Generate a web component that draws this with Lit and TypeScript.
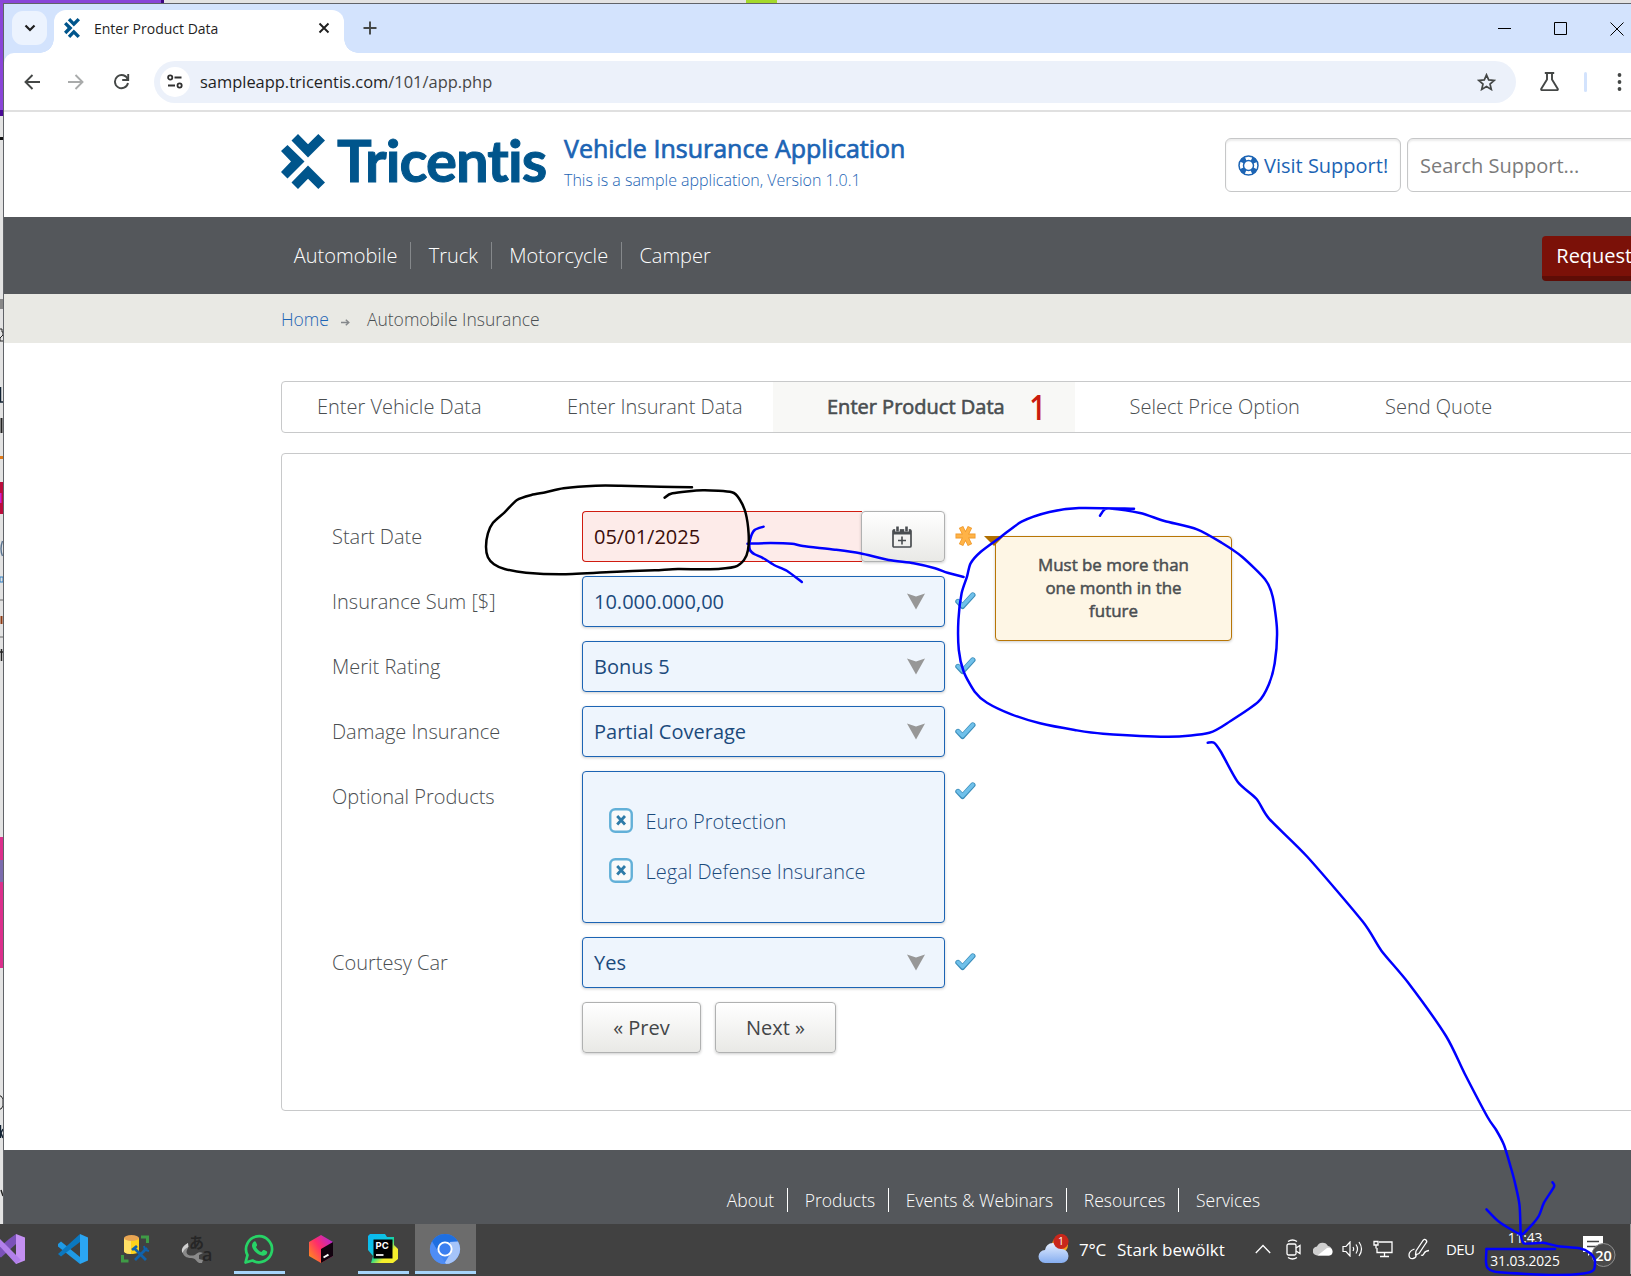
import { LitElement, html, css, svg } from "lit";
import { customElement, property } from "lit/decorators.js";

const base = css`
  :host { display: block; font-family: "Open Sans", "Noto Sans", "Liberation Sans", sans-serif; }
  * { box-sizing: border-box; }
  svg { display: block; flex: none; }
`;

const tricentisMark = (w: number, h: number) => html`
  <svg width=${w} height=${h} viewBox="0 0 44 55" preserveAspectRatio="none">
    <g fill="#00558c">
      <path d="M10.5 6.5 17 0l10 10.2L37.3 0 44 6.5 27 23.6z" />
      <path d="M6.5 11 23.5 27.5 6.5 44.5 0 38 10 27.5 0 17z" />
      <path d="M27 31.4 44 48.5 37.3 55 27 44.8 17 55 10.5 48.5z" />
    </g>
  </svg>`;

@customElement("browser-chrome")
export class BrowserChrome extends LitElement {
  static styles = [base, css`
    .tabs { display: flex; height: 49px; background: #d3e3fd; }
    .search { width: 35px; height: 34px; margin: 7px 0 0 8px; border-radius: 11px; background: #ecf3fe; display: grid; place-items: center; }
    .tab { position: relative; display: flex; align-items: center; width: 290px; height: 43px; margin: 6px 0 0 7px; padding: 0 0 7px 10px; background: #fff; border-radius: 12px 12px 0 0; font-size: 14px; color: #1f1f1f; }
    .tab::before, .tab::after { content: ""; position: absolute; bottom: 0; width: 14px; height: 14px; }
    .tab::before { left: -14px; background: radial-gradient(circle at 0 0, transparent 13.5px, #fff 14px); }
    .tab::after { right: -14px; background: radial-gradient(circle at 100% 0, transparent 13.5px, #fff 14px); }
    .name { width: 224px; margin-left: 14px; }
    .plus { margin: 17px 0 0 19px; }
    .win { display: flex; gap: 43px; margin: 18px 7px 0 auto; }
    .bar { display: flex; align-items: center; height: 57px; border-radius: 10px 0 0 0; background: #fff; }
    .corner { background: #d3e3fd; }
    .rule { height: 2px; background: #e0e0e0; }
    .back { margin-left: 20px; } .fwd { margin-left: 28px; } .reload { margin-left: 29px; }
    .omni { display: flex; align-items: center; width: 1362px; height: 42px; margin-left: 24px; padding: 0 20px 0 6px; border-radius: 21px; background: #ecf1fa; font-size: 16.45px; color: #1f1f1f; }
    .site { width: 30px; height: 30px; border-radius: 15px; background: #fff; display: grid; place-items: center; margin-right: 10px; }
    .path { color: #474747; }
    .star { margin-left: auto; }
    .flask { margin-left: 24px; }
    .sep { width: 3px; height: 20px; border-radius: 2px; background: #d3e3fd; margin-left: 25px; }
    .dots { margin-left: 30px; }
  `];
  render() {
    return html`
      <div class="tabs">
        <div class="search"><svg width="12" height="8" viewBox="0 0 12 8"><path d="M1.5 1.5 6 6l4.500-4.500" fill="none" stroke="#1f1f1f" stroke-width="2.200" /></svg></div>
        <div class="tab">
          ${tricentisMark(16, 20)}
          <span class="name">Enter Product Data</span>
          <svg width="12" height="12" viewBox="0 0 12 12"><path d="M1.500 1.500l9 9M10.500 1.500l-9 9" stroke="#1f1f1f" stroke-width="1.900" /></svg>
        </div>
        <svg class="plus" width="14" height="14" viewBox="0 0 14 14"><path d="M7 .5v13M.5 7h13" stroke="#444746" stroke-width="1.900" /></svg>
        <div class="win">
          <svg width="13" height="13"><path d="M0 6.500h13" stroke="#000" /></svg>
          <svg width="13" height="13"><path d="M.5.5h12v12H.5z" fill="none" stroke="#000" /></svg>
          <svg width="14" height="14"><path d="M.5.5l13 13M13.500.5l-13 13" stroke="#000" /></svg>
        </div>
      </div>
      <div class="corner"><div class="bar">
        <svg class="back" width="16" height="16" viewBox="0 0 16 16"><path d="M16 8H2M8.500 1 1.500 8l7 7" fill="none" stroke="#444746" stroke-width="1.900" /></svg>
        <svg class="fwd" width="16" height="16" viewBox="0 0 16 16"><path d="M0 8h14M7.500 1l7 7-7 7" fill="none" stroke="#a9abab" stroke-width="1.900" /></svg>
        <svg class="reload" width="17" height="17" viewBox="0 0 17 17"><path d="M14.800 6.500A6.600 6.600 0 1 0 15 10" fill="none" stroke="#444746" stroke-width="1.900" /><path d="M15.200 1v6h-6" fill="none" stroke="#444746" stroke-width="1.900" /></svg>
        <div class="omni">
          <div class="site"><svg width="16" height="15" viewBox="0 0 16 15"><g fill="none" stroke="#303030" stroke-width="1.800"><circle cx="3.200" cy="3.500" r="2.100" /><path d="M7.500 3.500h7M1 11.500h7" /><circle cx="12.600" cy="11.500" r="2.100" /></g></svg></div>
          <span>sampleapp.tricentis.com<span class="path">/101/app.php</span></span>
          <svg class="star" width="19" height="18" viewBox="0 0 19 18"><path d="M9.500 1.800l2.200 5.100 5.500.5-4.200 3.600 1.300 5.400-4.800-2.900-4.800 2.900L6 11 1.800 7.400l5.500-.5z" fill="none" stroke="#444746" stroke-width="1.700" /></svg>
        </div>
        <svg class="flask" width="19" height="19" viewBox="0 0 19 19"><path d="M4.800 1h9.400M7 1v6.500L1.300 16.800c-.4.700 0 1.300.7 1.300h15c.700 0 1.100-.6.7-1.300L12 7.500V1" fill="none" stroke="#444746" stroke-width="1.900" /></svg>
        <div class="sep"></div>
        <svg class="dots" width="5" height="20" viewBox="0 0 5 20"><g fill="#444746"><circle cx="2.500" cy="3" r="1.900" /><circle cx="2.500" cy="10" r="1.900" /><circle cx="2.500" cy="17" r="1.900" /></g></svg>
      </div></div>
      <div class="rule"></div>`;
  }
}

interface Field { label: string; value: string; }

@customElement("status-mark")
export class StatusMark extends LitElement {
  @property() kind = "ok";
  static styles = [base, css`:host { width: 21px; }`];
  render() {
    return this.kind === "ok"
      ? html`<svg width="21" height="19" viewBox="0 0 21 19"><path d="M3 10.500l4.600 4.800L17.800 4" fill="none" stroke="#3b8dba" stroke-width="5.400" stroke-linejoin="round" stroke-linecap="round" /><path d="M3 10.300l4.600 4.500L17.800 3.800" fill="none" stroke="#6fc0ea" stroke-width="3.500" stroke-linejoin="round" stroke-linecap="round" /></svg>`
      : html`<svg width="21" height="20" viewBox="0 0 21 20"><g stroke="#f09a2c" stroke-width="4.800"><path d="M.5 10h20M6 1l9 18M15 1L6 19" /></g><g stroke="#ffb347" stroke-width="3.200"><path d="M1.300 10h18.400M6.400 1.800l8.200 16.400M14.600 1.800l-8.200 16.400" /></g></svg>`;
  }
}

@customElement("insurance-page")
export class InsurancePage extends LitElement {
  static styles = [base, css`
    :host { width: 1700px; color: #4a4e51; font-size: 20px; font-weight: 300; }
    .head { display: flex; height: 105px; padding-left: 277px; }
    .mark { margin-top: 22px; }
    .brand { width: 227px; margin: 18px 0 0 12px; font: 700 58px/60px Lato, sans-serif; letter-spacing: -.95px; color: #00558c; -webkit-text-stroke: 1px #00558c; }
    .titles { width: 661px; margin-top: 19px; color: #1c64b4; }
    .title { font-size: 25px; line-height: 34px; font-weight: 400; -webkit-text-stroke: .7px #1c64b4; }
    .sub { font-size: 16px; line-height: 22px; margin-top: 4px; }
    .box { display: flex; align-items: center; height: 54px; margin-top: 26px; border: 1px solid #c6c7c8; border-radius: 6px; box-shadow: inset 0 2px 2px #ececec; font-weight: 400; }
    .support { width: 176px; padding-left: 12px; gap: 5px; color: #1c64b4; }
    .find { width: 290px; margin-left: 6px; padding-left: 12px; color: #7b7b7b; }
    .nav { display: flex; height: 77px; padding: 25px 0 0 272.500px; background: #54575b; color: #fff; }
    .nav span { height: 27px; line-height: 27px; padding: 0 13px 0 17.300px; border-right: 1px solid #85888b; }
    .nav span:nth-child(4) { border: 0; }
    .req { width: 180px; height: 45px; margin: -6px 0 0 818.500px; padding-left: 14px; line-height: 40px; font-weight: 400; background: #7b1108; border-bottom: 5px solid #5e0d06; border-radius: 4px; }
    .crumbs { display: flex; height: 49px; padding: 12px 0 0 277px; background: #e9e9e4; font-size: 17.500px; line-height: 26px; }
    .crumbs a { color: #1c64b4; }
    .crumbs svg { margin: 13px 17px 0 12px; }
    .steps { display: flex; width: 1420px; height: 52px; margin: 38px 0 20px 277px; padding-left: 35px; border: 1px solid #c8c9ca; border-radius: 4px; line-height: 50px; }
    .s1 { width: 250px; } .s2 { width: 205.500px; }
    .s3 { display: flex; width: 302.500px; padding-left: 54.500px; background: #f8f8f6; font-weight: 400; -webkit-text-stroke: .6px #4a4e51; }
    .s3 b { margin-left: 23px; font-size: 34px; font-weight: 600; color: #cb1b0e; -webkit-text-stroke: 0; transform: scaleX(.86); }
    .s4 { width: 310px; padding-left: 54.500px; }
    .panel { width: 1420px; height: 658px; margin-left: 277px; padding: 57px 0 0 50px; border: 1px solid #c8c9ca; border-radius: 4px; }
    .row { display: flex; height: 51px; margin-bottom: 14px; }
    .row.tall { height: 152px; }
    .row.tall .input { height: 152px; }
    .label { width: 250px; line-height: 51px; }
    .input { display: flex; align-items: center; justify-content: space-between; width: 363px; height: 51px; padding: 0 19px 0 11px; border: 1px solid #1c64b4; border-radius: 4px; background: #eef5fd; color: #1b4a7c; font-weight: 400; box-shadow: 0 1px 3px #0003; }
    .input.date { width: 280px; border-color: #d01c10; border-right: 0; border-radius: 4px 0 0 4px; background: #fdebe9; color: #3a0d0a; box-shadow: none; }
    .pick { display: grid; place-items: center; width: 84px; height: 51px; margin-left: -1px; padding-right: 3px; border: 1px solid #b0b1b1; border-radius: 4px; background: linear-gradient(#fff, #e9e9e6); box-shadow: 0 1px 3px #0003; }
    status-mark { margin: 15px 0 0 10px; }
    .tall status-mark { margin-top: 10px; }
    .input.checks { display: grid; align-content: start; justify-content: start; grid-template-columns: 24px auto; gap: 0 13px; grid-auto-rows: 50px; padding: 24px 0 0 25.500px; align-items: center; font-weight: 300; }
    .checks svg { margin-top: -2px; }
    .buttons { display: flex; gap: 14px; margin-left: 250px; }
    .btn { height: 51px; line-height: 49px; text-align: center; font-weight: 400; border: 1px solid #b0b1b1; border-radius: 4px; background: linear-gradient(#fff, #e9e9e6); box-shadow: 0 1px 3px #0003; color: #434648; }
    .prev { width: 119px; } .next { width: 121px; }
    .anchor { position: relative; }
    .tip { position: absolute; left: 19px; top: 25px; width: 237px; height: 105px; padding-top: 16px; border: 1px solid #b87606; border-radius: 4px; background: #fef6e5; text-align: center; font-size: 16.900px; line-height: 23px; font-weight: 400; -webkit-text-stroke: .5px #4a4e51; box-shadow: 0 1px 3px #0003; }
    .tip::before { content: ""; position: absolute; left: -12px; top: -1px; border: 10px solid transparent; border-top-color: #b06f00; border-bottom: 0; }
    .foot { display: flex; height: 74px; margin-top: 39px; padding: 38px 0 0 706px; background: #54575b; color: #fff; font-size: 17.500px; line-height: 24px; }
    .foot span { height: 24px; padding: 0 12.800px 0 16.800px; border-right: 1px solid #fff; }
    .foot span:last-child { border: 0; }
  `];

  private select(f: Field) {
    return html`<div class="row">
      <div class="label">${f.label}</div>
      <div class="input"><span>${f.value}</span>
        <svg width="18" height="17" viewBox="0 0 18 17"><path d="M0 .5 9 3.500l9-3L9 16.500z" fill="#979797" /></svg></div>
      <status-mark></status-mark></div>`;
  }

  private check(text: string) {
    return html`<svg width="24" height="25" viewBox="0 0 24 25"><rect x="1.250" y="1.250" width="21.500" height="22.500" rx="5" fill="#fafafa" stroke="#62b0d8" stroke-width="2.400" /><path d="M8.200 8l7.800 8.500M16 8l-7.800 8.500" stroke="#2f7ba8" stroke-width="2.800" /></svg><span>${text}</span>`;
  }

  render() {
    return html`
      <div class="head">
        <div class="mark">${tricentisMark(44, 55)}</div>
        <div class="brand">Tricentis</div>
        <div class="titles"><div class="title">Vehicle Insurance Application</div><div class="sub">This is a sample application, Version 1.0.1</div></div>
        <div class="box support">
          <svg width="21" height="21" viewBox="0 0 21 21"><g fill="none" stroke="#1c64b4"><circle cx="10.500" cy="10.500" r="9.500" stroke-width="1.500" /><circle cx="10.500" cy="10.500" r="5" stroke-width="1.500" /><circle cx="10.500" cy="10.500" r="7.500" stroke-width="4.500" stroke-dasharray="5.500 6.280" stroke-dashoffset="-3.100" /></g></svg>
          <span>Visit Support!</span></div>
        <div class="box find">Search Support...</div>
      </div>
      <div class="nav"><span>Automobile</span><span>Truck</span><span>Motorcycle</span><span>Camper</span><div class="req">Request</div></div>
      <div class="crumbs"><a>Home</a><svg width="9" height="7" viewBox="0 0 9 7"><path d="M0 3.500h7.500M4.800.8l3 2.700-3 2.700" fill="none" stroke="#85888b" stroke-width="1.400" /></svg><span>Automobile Insurance</span></div>
      <div class="steps"><div class="s1">Enter Vehicle Data</div><div class="s2">Enter Insurant Data</div><div class="s3">Enter Product Data<b>1</b></div><div class="s4">Select Price Option</div><div>Send Quote</div></div>
      <div class="panel">
        <div class="row">
          <div class="label">Start Date</div>
          <div class="input date">05/01/2025</div>
          <div class="pick"><svg width="20" height="22" viewBox="0 0 20 22"><rect x="1" y="4" width="18" height="17" rx="1" fill="none" stroke="#4a4e51" stroke-width="1.700" /><path d="M1 3.500h18v5H1z" fill="#4a4e51" /><path d="M5.500.5v5M14.500.5v5" stroke="#fff" stroke-width="4.500" /><path d="M5.500.5v5M14.500.5v5" stroke="#4a4e51" stroke-width="2.600" /><path d="M10 10.500v8M6 14.500h8" stroke="#4a4e51" stroke-width="1.600" /></svg></div>
          <status-mark kind="required"></status-mark>
          <div class="anchor"><div class="tip">Must be more than<br />one month in the<br />future</div></div>
        </div>
        ${[{ label: "Insurance Sum [$]", value: "10.000.000,00" }, { label: "Merit Rating", value: "Bonus 5" }, { label: "Damage Insurance", value: "Partial Coverage" }].map((f) => this.select(f))}
        <div class="row tall">
          <div class="label">Optional Products</div>
          <div class="input checks">${this.check("Euro Protection")}${this.check("Legal Defense Insurance")}</div>
          <status-mark></status-mark>
        </div>
        ${this.select({ label: "Courtesy Car", value: "Yes" })}
        <div class="buttons"><div class="btn prev">« Prev</div><div class="btn next">Next »</div></div>
      </div>
      <div class="foot"><span>About</span><span>Products</span><span>Events &amp; Webinars</span><span>Resources</span><span>Services</span></div>`;
  }
}

const whatsapp = svg`<path d="M1.500 28.500l2-7.300A13 13 0 1 1 8.600 26.500z" fill="none" stroke="#27d366" stroke-width="2.700" stroke-linejoin="round"/><path d="M9.500 8c.8-.9 2-.9 2.500.2l1.100 2.500c.2.600-.2 1.300-1.200 2.300 1.200 2.300 3 4 5.500 5.100l1.500-1.800c.4-.4.8-.5 1.300-.3l2.500 1.300c.7.400.6 1.300.2 2.300-.8 1.800-3.200 2.500-5.200 1.900C12 20 8.500 15.500 8 12c-.1-1.500.6-3.200 1.500-4z" fill="#27d366"/>`;

@customElement("task-bar")
export class TaskBar extends LitElement {
  static styles = [base, css`
    :host { height: 52px; background: #414141; color: #fff; overflow: hidden; }
    .bar { display: flex; height: 50px; }
    .apps { display: grid; grid-template-columns: repeat(8, 62px); margin-left: -20px; width: 496px; }
    .app { display: grid; place-items: center; position: relative; margin: 0 .5px; }
    .app svg { overflow: visible; }
    .run::after { content: ""; position: absolute; bottom: 0; height: 3px; width: 51px; background: #a7d5fb; }
    .on { background: #6c6c6c; } .on::after { width: 61px; }
    .tray { display: flex; width: 592px; margin-left: auto; align-items: center; }
    .weather { margin-left: -1px; }
    .temp { font-size: 17px; margin-left: 10px; width: 38px; letter-spacing: -.2px; }
    .sky { font-size: 17px; width: 138px; }
    .chev { margin-right: 15px; } .meet { margin-right: 12px; } .cloud { margin-right: 9px; } .vol { margin-right: 10px; } .net { margin-right: 15px; } .pen { margin-right: 16px; }
    .lang { width: 44px; font-size: 15px; letter-spacing: -.6px; }
    .clock { width: 70px; font-size: 13.800px; line-height: 23px; text-align: center; letter-spacing: -.1px; padding-bottom: 1px; }
    .note { margin: 6px 0 0 23px; }
    .edge { width: 1px; height: 50px; margin-left: auto; background: #999; }
    .pc { font: 700 9.500px/1 Inter, "Open Sans", sans-serif; }
    .num { font: 600 14.500px/1 "Open Sans", sans-serif; }
    .badge { font: 400 10.500px/1 "Open Sans", sans-serif; }
    .cjk { font: 700 15px/1 "Noto Sans CJK JP", sans-serif; }
    .lat { font: 600 18px/1 "Open Sans", sans-serif; }
  `];
  render() {
    const app = (body: unknown, state = "") => html`<div class="app ${state}"><svg width="30" height="30" viewBox="0 0 30 30">${body}</svg></div>`;
    return html`<div class="bar">
      <div class="apps">
        ${app(svg`<path d="M20 0l9 3.500v23L20 30z" fill="#c490f2"/><path d="M-3 19 13 5l7-5v10L5 23.500z" fill="#7b52b8"/><path d="M-2 6l5-2 22 22-5 4z" fill="#b280ea"/>`)}
        ${app(svg`<path d="M0 10l3-2.500 19 15.500v7L0 12.500z" fill="#1f9ae6"/><path d="M0 20l22-20v8L3 22.500z" fill="#0b78c0"/><path d="M22 0l8 3.500v23L22 30z" fill="#2ba5f2"/>`)}
        ${app(svg`<path d="M4 4v13c0 4 15 4 15 0V4z" fill="#ffd31c"/><path d="M4 4v13c0 3 7 3 7 3V4z" fill="#ffe066"/><ellipse cx="11.500" cy="4" rx="7.500" ry="3" fill="#e8a552"/><path d="M21 3h6.500v6M2.500 21v6h6" fill="none" stroke="#3f9b46" stroke-width="3"/><path d="M14 14l12 12M27 14 15 26M12 16l5-4" stroke="#0f62ad" stroke-width="2.800"/><path d="M24 12l1 4 4 1" fill="none" stroke="#0f62ad" stroke-width="2"/>`)}
        ${app(svg`<path d="M6 9c-9 6-6 15 3 15 6 0 5 6 11 5l1-3-4-1v-4l4-2c-4-2-6 0-8 2-6 2-11-1-7-7z" fill="#8a8a8a"/><path d="M6 9c-6 3-7 7-5.500 10 1-3 3-5 6-6z" fill="#d0d0d0"/><text x="7" y="13.500" class="cjk" fill="#262626">あ</text><text x="20" y="26.500" class="lat" fill="#262626">a</text>`)}
        ${app(whatsapp, "run")}
        ${app(svg`<defs><linearGradient id="j" x1="0" y1=".8" x2="1" y2="0"><stop stop-color="#ff8a1f"/><stop offset=".45" stop-color="#ff2d6a"/><stop offset="1" stop-color="#a428e8"/></linearGradient></defs><path d="M15 1l12 7v14l-12 7-12-7V8z" fill="url(#j)"/><path d="M15 15l12-7v14l-12 7z" fill="#12030f"/><path d="M17.500 23.500l5-2.800" stroke="#fff" stroke-width="2"/>`)}
        ${app(svg`<defs><linearGradient id="p" x1="0" y1="0" x2="1" y2="1"><stop stop-color="#08b8f5"/><stop offset=".4" stop-color="#10c4e0"/><stop offset=".52" stop-color="#1fd98a"/><stop offset=".7" stop-color="#f5ee2c"/></linearGradient></defs><path d="M0 2l2-2h15l2 3h7v8l4 4v10l-5 4H3l2-7-5-6z" fill="url(#p)"/><path d="M5.500 5.500h19v19h-19z" fill="#000"/><text x="7.500" y="14.800" class="pc" fill="#fff">PC</text><path d="M8 21h7.500" stroke="#fff" stroke-width="1.700"/>`, "run")}
        ${app(svg`<circle cx="15" cy="15" r="15" fill="#4285f0"/><path d="M2 7.500A15 15 0 0 1 28 7.500L15 8l-6.500 11z" fill="#1f6fe0"/><path d="M28 7.500A15 15 0 0 1 14 30l7-11.500L20 8z" fill="#a5c4fa"/><path d="M2 7.500 9 19l7 11A15 15 0 0 1 2 7.500z" fill="#4f8df5"/><circle cx="15" cy="15" r="7.600" fill="#fff"/><circle cx="15" cy="15" r="5.700" fill="#3b7ff0"/>`, "run on")}
      </div>
      <div class="tray">
        <svg class="weather" width="31" height="30" viewBox="0 0 31 30"><defs><linearGradient id="w" x1="0" y1="0" x2="0" y2="1"><stop stop-color="#e3edff"/><stop offset="1" stop-color="#86aef0"/></linearGradient></defs><circle cx="22" cy="11" r="8" fill="#f5a31c"/><path d="M7 29a6.500 6.500 0 0 1 0-13 8.500 8.500 0 0 1 16.500-1 7 7 0 0 1 0 14z" fill="url(#w)"/><circle cx="23" cy="7.500" r="7.600" fill="#c8271b"/><text x="20" y="11.300" class="badge" fill="#fff">1</text></svg>
        <span class="temp">7°C</span><span class="sky">Stark bewölkt</span>
        <svg class="chev" width="16" height="10" viewBox="0 0 16 10"><path d="M.8 9 8 1.500 15.200 9" fill="none" stroke="#fff" stroke-width="1.300" /></svg>
        <svg class="meet" width="15" height="21" viewBox="0 0 15 21"><g fill="none" stroke="#fff" stroke-width="1.300"><rect x="1" y="5" width="9" height="11" rx="1.500" /><path d="M10 9l4-2.500v8L10 12M2 2.500Q6.500-.5 11 2.500M2 18.500q4.500 3 9 0" /></g></svg>
        <svg class="cloud" width="20" height="14" viewBox="0 0 20 14"><path d="M4.500 13.500a4.500 4.500 0 0 1-.5-9 6 6 0 0 1 11-.5 5 5 0 0 1 1 9.500z" fill="#cfcfcf" /><path d="M4.500 13.500 14 6a4 4 0 0 1 5.500 4.500 3.500 3.500 0 0 1-3.500 3z" fill="#fff" /></svg>
        <svg class="vol" width="21" height="16" viewBox="0 0 21 16"><g fill="none" stroke="#fff" stroke-width="1.200"><path d="M1 5.500h3l4-4.500v14l-4-4.500H1z" /><path d="M11 6q1.300 2 0 4M14 3.500q3 4.500 0 9M17 1q5 7 0 14" /></g></svg>
        <svg class="net" width="20" height="18" viewBox="0 0 20 18"><g fill="none" stroke="#fff" stroke-width="1.300"><path d="M6 2h13v10.500H4V8M11.500 12.500V16M7 16.500h9" /><path d="M1 1.500h4v3.500H1zM3 5v3.500" /></g></svg>
        <svg class="pen" width="22" height="22" viewBox="0 0 22 22"><g fill="none" stroke="#fff" stroke-width="1.300" stroke-linejoin="round"><path d="M8 13 15 2.500q1.500-2 3-.5t0 3L11 15.500l-3.500 1.500zM6.500 11q-5.500 2-5.500 6 0 4 4 3.500 4-1 3-4.500M13 17q2 1 3-1.500t5-3" /></g></svg>
        <span class="lang">DEU</span>
        <div class="clock">11:43<br />31.03.2025</div>
        <svg class="note" width="36" height="32" viewBox="0 0 36 32"><path d="M0 0h20v16H9l-4 4v-4H0z" fill="#fff" /><path d="M4 5.500h12M4 10.500h12" stroke="#444" stroke-width="1.400" /><circle cx="20.500" cy="19" r="11.500" fill="#4a4a4a" stroke="#8f8f8f" /><text x="12.300" y="24.500" class="num" fill="#fff">20</text></svg>
        <div class="edge"></div>
      </div>
    </div>`;
  }
}

/* Catmull-Rom spline through every sampled pen position. */
const smooth = (points: string) => {
  const p = points.trim().split(/\s+/).map((s) => s.split(",").map(Number));
  const at = (i: number) => p[Math.max(0, Math.min(p.length - 1, i))];
  let d = `M${p[0][0]} ${p[0][1]}`;
  for (let i = 0; i < p.length - 1; i++) {
    const [a, b, c, e] = [at(i - 1), at(i), at(i + 1), at(i + 2)];
    d += `C${b[0] + (c[0] - a[0]) / 8} ${b[1] + (c[1] - a[1]) / 8} ${c[0] - (e[0] - b[0]) / 8} ${c[1] - (e[1] - b[1]) / 8} ${c[0]} ${c[1]}`;
  }
  return d;
};

const BLUE = [
  "1134,508.700 1079,508 1049.400,512 1021.600,521.700 1001,536.700 980.800,551.700 970.600,563.300 967,576.700 961.600,593.300 958.400,620 958.800,650 963.700,671.700 974.700,691.700 987,702.700 1011.400,714.300 1040,723.300 1074.700,730 1103,733.700 1168.600,736.700 1209.400,732.700 1230.600,721 1258.400,701.700 1268.600,685 1274.700,663.300 1277,630 1272.700,596.700 1265,579.300 1242,556.700 1221.600,542.700 1197,529.300 1164.500,521 1140,513 1109.400,508.500 1104,510 1100,515.700",
  "963.600,577 947.500,572.700 935,568.300 913.600,563.300 888.600,560 860,553.300 835,549.700 802.900,546 792,543.700 770.700,543 747.500,543.700",
  "763.600,526.700 754.600,530 750,540 750,550 754.600,554.300 761.800,557.300 774,565 786.800,570.700 801.800,582",
  "1207.700,742.700 1214,742.700 1221,752 1237.800,782 1256.600,799 1269,818.600 1307.500,857 1362.700,921.600 1381.400,950.700 1408.400,983 1446,1036 1464.600,1073.500 1487.500,1117 1496.200,1130 1504,1145 1511,1168 1515,1183 1519.500,1205 1520.700,1235",
  "1486.500,1209.300 1499,1221.700 1520.300,1234.300 1527,1230 1538.400,1216.700 1544,1202.700 1554,1186.700 1552.500,1182.300",
  "1520.700,1233 1524,1243.300 1543,1242.700 1557,1246 1579.500,1248.300 1589.500,1252.700 1594.800,1260 1593.600,1270 1583.500,1273.500 1555,1275 1499,1272.300 1488,1268.300 1486,1261.700 1486.500,1249",
  "1486.500,1249 1520,1249 1555,1249",
];
const BLACK = "692,487.300 660,486.700 620.700,485.700 595.700,485.700 563.600,488.300 545.700,492.300 531.400,495 517,500 504.600,512.300 493,522.700 487.900,533.300 486,546.700 487.900,557.300 494,564.300 504.600,569 526,572.700 563.600,574.300 617,571.700 654.600,570.300 677.900,569 710,569.300 735,566.700 744,560 748,550 748.600,533.300 745.700,513.300 740,500 732,492.300 702.900,490.300 672.500,493.300 664.600,497.700";

@customElement("app-root")
export class AppRoot extends LitElement {
  static styles = [base, css`
    :host { position: relative; width: 1631px; height: 1276px; overflow: hidden; background: #e3e3e3; }
    .top { height: 1224px; display: flex; overflow: hidden; }
    .edge { width: 3px; }
    .col { width: 1628px; overflow: hidden; }
    .window { border: 1px solid #606368; border-width: 1px 0 0 1px; height: 1221px; overflow: hidden; background: #fff; }
    .ink { position: absolute; left: 0; top: 0; pointer-events: none; }
  `];
  render() {
    return html`
      <div class="top">
        <svg class="edge" width="3" height="1224">
          <path d="M0 0h3v116H0z" fill="#8a45d8" /><path d="M0 110h3v6H0z" fill="#4a0a96" /><path d="M0 137h3v3H0z" fill="#111" />
          <path d="M0 299h3v10H0z" fill="#888" /><path d="M0 329h2v3h1v3l-3 3v3h3" fill="none" stroke="#222" />
          <path d="M.5 387v15h2.500" fill="none" stroke="#123" stroke-width="1.500" /><path d="M1.500 418v15" stroke="#222" stroke-width="2" />
          <path d="M0 456h3v3H0z" fill="#e07b1a" /><path d="M0 482h3v32H0z" fill="#bb0c3c" /><path d="M0 493h1.500v10H0z" fill="#d01fd0" />
          <path d="M2.500 541q-3 8 0 15" fill="none" stroke="#57728f" stroke-width="1.400" /><path d="M0 577h3v5H0z" fill="none" stroke="#2f7fc4" />
          <path d="M0 600h3M0 637h3" stroke="#666" /><path d="M1.500 616v8" stroke="#8f3a12" stroke-width="2" /><path d="M1.500 649v12M0 652h3" stroke="#222" stroke-width="1.500" />
          <path d="M0 837h3v131H0z" fill="#dc2f8c" /><path d="M0 860h3v22H0z" fill="#7c6cae" />
          <path d="M0 1096h1l2 3v7l-2 3H0" fill="none" stroke="#222" /><path d="M.5 1125v13M3 1129l-2 4 2 5" fill="none" stroke="#123" stroke-width="1.400" />
          <path d="M1 1190l2 6" stroke="#222" stroke-width="1.500" />
        </svg>
        <div class="col">
          <svg width="1628" height="3"><path d="M0 0h158v3H0z" fill="#8a45d8" /><path d="M158 0h3v3h-3z" fill="#3d0880" /><path d="M743 0h31v3h-31z" fill="#a4d92a" /></svg>
          <div class="window">
            <browser-chrome></browser-chrome>
            <insurance-page></insurance-page>
          </div>
        </div>
      </div>
      <task-bar></task-bar>
      <svg class="ink" width="1631" height="1276" fill="none" stroke-width="2.500" stroke-linecap="round" stroke-linejoin="round">
        ${BLUE.map((p) => svg`<path d=${smooth(p)} stroke="#0000ff" />`)}
        <path d=${smooth(BLACK)} stroke="#000" />
      </svg>`;
  }
}
